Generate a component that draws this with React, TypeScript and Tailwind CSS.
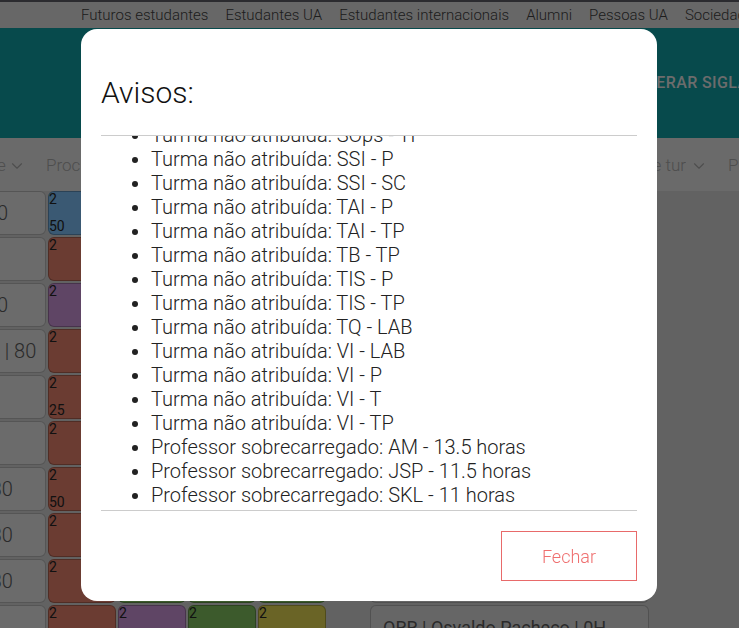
import { useLayoutEffect, useRef } from "react"
import { ChevronDown } from "lucide-react"

const topLinks = [
  "Futuros estudantes",
  "Estudantes UA",
  "Estudantes internacionais",
  "Alumni",
  "Pessoas UA",
  "Sociedade",
]

const avisos = [
  "Turma não atribuída: AED - TP",
  "Turma não atribuída: BD - P",
  "Turma não atribuída: CBD - TP",
  "Turma não atribuída: IHC - P",
  "Turma não atribuída: SOps - P",
  "Turma não atribuída: SOps - TP",
  "Turma não atribuída: SSI - P",
  "Turma não atribuída: SSI - SC",
  "Turma não atribuída: TAI - P",
  "Turma não atribuída: TAI - TP",
  "Turma não atribuída: TB - TP",
  "Turma não atribuída: TIS - P",
  "Turma não atribuída: TIS - TP",
  "Turma não atribuída: TQ - LAB",
  "Turma não atribuída: VI - LAB",
  "Turma não atribuída: VI - P",
  "Turma não atribuída: VI - T",
  "Turma não atribuída: VI - TP",
  "Professor sobrecarregado: AM - 13.5 horas",
  "Professor sobrecarregado: JSP - 11.5 horas",
  "Professor sobrecarregado: SKL - 11 horas",
]

const blue = "bg-[#74b2e6]"
const brown = "bg-[#d67864]"
const purple = "bg-[#be8aca]"
const green = "bg-[#78b458]"
const yellow = "bg-[#d4c84c]"

type Slot = { color: string; bottom?: string }

const rows: { label: string; slots: Slot[] }[] = [
  { label: "Sala 4.10 | 40", slots: [{ color: blue, bottom: "50" }, { color: green }, { color: brown }, { color: purple }] },
  { label: "", slots: [{ color: brown }, { color: purple }, { color: green }, { color: yellow }] },
  { label: "Sala 4.21 | 40", slots: [{ color: purple }, { color: brown }, { color: blue }, { color: green }] },
  { label: "Anfi. 23.1.01 | 80", slots: [{ color: brown }, { color: green }, { color: green }, { color: yellow }] },
  { label: "", slots: [{ color: brown, bottom: "25" }, { color: purple }, { color: brown }, { color: green }] },
  { label: "", slots: [{ color: brown }, { color: blue }, { color: green }, { color: yellow }] },
  { label: "Sala 4.1.2 | 30", slots: [{ color: brown, bottom: "50" }, { color: green }, { color: purple }, { color: green }] },
  { label: "Sala 4.1.3 | 30", slots: [{ color: brown }, { color: brown }, { color: green }, { color: yellow }] },
  { label: "Sala 4.1.4 | 30", slots: [{ color: brown }, { color: green, bottom: "25" }, { color: green }, { color: green }] },
  { label: "", slots: [{ color: brown }, { color: purple }, { color: green }, { color: yellow }] },
]

const cards = [
  "JMR | Joaquim Rocha | 4H",
  "ASM | Ana Moreira | 2H",
  "CBS | Carlos Bastos | 6H",
  "DGP | Diogo Pinto | 2H",
  "FLS | Filipa Lemos | 0H",
  "HSA | Helena Sá | 4H",
  "MCT | Miguel Costa | 2H",
  "NRF | Nuno Ferreira | 0H",
  "PLS | Paulo Lopes | 2H",
  "ORR | Osvaldo Pacheco | 0H",
]

function AvisosModal() {
  const listRef = useRef<HTMLDivElement>(null)

  useLayoutEffect(() => {
    if (listRef.current) listRef.current.scrollTop = listRef.current.scrollHeight
  }, [])

  return (
    <div className="fixed inset-0 flex items-center justify-center bg-black/50 pt-[2px] pr-px">
      <div className="flex h-[572px] w-[576px] flex-col rounded-2xl bg-white px-5 text-[#222]">
        <h2 className="mt-[46px] mb-[24px] text-[30px] leading-[36px] font-light text-[#111]">Avisos:</h2>
        <div
          ref={listRef}
          className="h-[376px] overflow-y-auto border-y border-[#cccccc] pb-[3px] [scrollbar-width:none]"
        >
          <ul className="list-disc pl-[50px] text-[20px] leading-[24px] font-light">
            {avisos.map((a) => (
              <li key={a}>{a}</li>
            ))}
          </ul>
        </div>
        <div className="flex justify-end py-5">
          <button className="h-[50px] w-[136px] border border-[#e86a6a] text-[18px] font-light text-[#ef6f6f]">
            Fechar
          </button>
        </div>
      </div>
    </div>
  )
}

export default function App() {
  return (
    <div className="relative h-screen w-full overflow-hidden bg-[#c4c4c4] font-['Roboto',sans-serif]">
      {/* barra superior UA */}
      <div className="flex h-[28px] items-center gap-[17px] border-t-2 border-[#56565e] bg-[#cecece] pt-px pl-[81px] text-[15px] font-light whitespace-nowrap text-[#3a3a3a]">
        {topLinks.map((l) => (
          <span key={l}>{l}</span>
        ))}
      </div>

      {/* cabeçalho */}
      <div className="flex h-[110px] items-center bg-[#0e9498] pl-[628px] whitespace-nowrap">
        <span className="text-[16px] font-medium tracking-wide text-[#d8d8d8] uppercase">Alterar siglas</span>
      </div>

      {/* filtros */}
      <div className="flex h-[53px] items-center bg-[#d4d4d4] pt-[3px] text-[17px] font-light whitespace-nowrap text-[#9c9c9c]">
        <div className="-ml-[56px] flex w-[102px] shrink-0 items-center gap-[2px]">
          Docente
          <ChevronDown size={18} strokeWidth={1.5} />
        </div>
        <div className="w-[560px] shrink-0">Procurar docente...</div>
        <div className="flex shrink-0 items-center gap-[4px]">
          <span className="w-[80px] overflow-hidden">Tipo de turma</span>
          <ChevronDown size={18} strokeWidth={1.5} />
        </div>
        <div className="ml-[20px] shrink-0">Procurar sala...</div>
      </div>

      {/* horário */}
      <div className="flex">
        <div className="-ml-[118px] grid shrink-0 grid-cols-[164px_68px_68px_68px_68px] gap-[2px]">
          {rows.map((r, i) => (
            <div key={i} className="contents">
              <div className="flex h-[44px] items-center overflow-hidden rounded-md border border-black/20 bg-[#d6d6d6] pl-2 text-[20px] font-light whitespace-nowrap text-[#555]">
                {r.label}
              </div>
              {r.slots.map((s, j) => (
                <div
                  key={j}
                  className={`flex h-[44px] flex-col justify-between rounded-md border border-black/25 ${s.color} text-[14px] leading-[15px] text-[#222]`}
                >
                  <span>2</span>
                  {s.bottom && <span>{s.bottom}</span>}
                </div>
              ))}
            </div>
          ))}
        </div>

        <div className="ml-[44px] flex w-[279px] shrink-0 flex-col gap-[2px]">
          {cards.map((c) => (
            <div
              key={c}
              className="flex h-[44px] items-center rounded-md border border-black/20 bg-[#cccccc] pl-3 text-[18px] whitespace-nowrap text-[#555]"
            >
              {c}
            </div>
          ))}
        </div>
      </div>

      <AvisosModal />
    </div>
  )
}
